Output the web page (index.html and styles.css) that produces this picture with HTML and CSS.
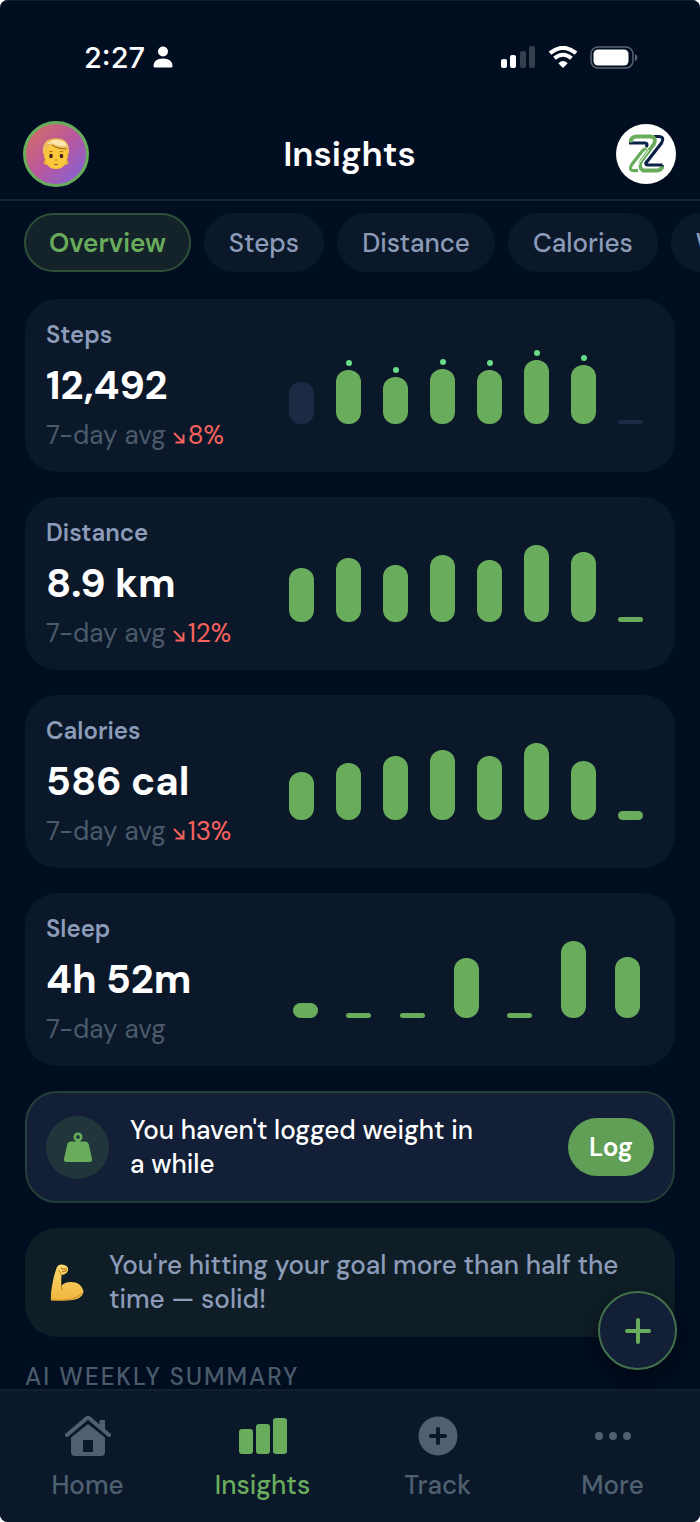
FILE: index.html
```html
<!DOCTYPE html>
<html lang="en">
<head>
    <meta charset="UTF-8">
    <meta name="viewport" content="width=device-width, initial-scale=1.0">
    <title>Insights</title>
    <link rel="stylesheet" href="styles.css">
</head>
<body>
    <div class="app">
        <!-- Status bar -->
        <div class="status-bar">
            <div class="status-left">
                <span class="time">2:27</span>
                <svg width="20" height="22" viewBox="0 0 20 22" fill="#fff">
                    <circle cx="10" cy="5.5" r="5"/>
                    <path d="M0.5 20C0.5 15.500 4 12.500 10 12.500S19.500 15.500 19.500 20Q19.500 21.500 18 21.500H2Q0.500 21.500 0.500 20Z"/>
                </svg>
            </div>
            <div class="status-right">
                <svg width="35" height="23" viewBox="0 0 35 23">
                    <rect x="0" y="13" width="6" height="9" rx="2" fill="#fff"/>
                    <rect x="9" y="9" width="6" height="13" rx="2" fill="#fff"/>
                    <rect x="19" y="5" width="6" height="17" rx="2" fill="#363f4e"/>
                    <rect x="28" y="0" width="6" height="22" rx="2" fill="#363f4e"/>
                </svg>
                <svg width="30" height="23" viewBox="0 0 30 23" fill="none" stroke="#fff">
                    <path d="M2 7.200Q15 -3.400 28 7.200" stroke-width="4.200"/>
                    <path d="M6.500 12.300Q15 5.300 23.500 12.300" stroke-width="4"/>
                    <path d="M10.300 17.200Q15 12.600 19.700 17.200L15 22Z" fill="#fff" stroke="none"/>
                </svg>
                <svg width="48" height="23" viewBox="0 0 48 23">
                    <rect x="1" y="1" width="42" height="21" rx="7" fill="none" stroke="#5b6370" stroke-width="1.500"/>
                    <rect x="3.500" y="3.500" width="35" height="16" rx="4.500" fill="#fff"/>
                    <path d="M45 8Q47.500 9 47.500 11.500T45 15Z" fill="#5b6370"/>
                </svg>
            </div>
        </div>

        <!-- Header -->
        <header class="header">
            <button class="avatar" aria-label="Profile">
                <svg width="28" height="32" viewBox="0 0 28 32">
                    <path d="M2 12Q1 0 14 0.500T26.500 12Q27 18 25 22L27 25L24 27H4L1 25L3 22Q1 18 2 12Z" fill="#e5a93d"/>
                    <path d="M9 24H19V29Q14 32 9 29Z" fill="#cf922f"/>
                    <path d="M3 13Q3 4 14 5T25 13V19Q24 31 14 31T3 19Z" fill="#fcc93e"/>
                    <path d="M1 16Q-1 1 14 0.500Q28 0 27 16Q25 15 24.500 11Q16 12 10 7Q5 9 4 15Q3 17 1 16Z" fill="#efbd59"/>
                    <path d="M5 6Q10 1 17 2T25 8Q17 9 10 5.500Z" fill="#fae6ae"/>
                    <path d="M10 7Q15 11 24.500 11" fill="none" stroke="#9c661d"/>
                    <ellipse cx="9" cy="18" rx="1.800" ry="2.200" fill="#432719"/>
                    <ellipse cx="19.500" cy="18" rx="1.800" ry="2.200" fill="#432719"/>
                    <path d="M7 14Q9 12.500 11 14M17.500 14Q19.500 12.500 21.500 14" fill="none" stroke="#a8721f"/>
                    <path d="M13 22H15.500" stroke="#dd9425" stroke-width="1.500"/>
                    <path d="M11 25.500Q14 26.500 17 25.500Q14 29 11 25.500Z" fill="#96502a"/>
                </svg>
            </button>
            <h1 class="title">Insights</h1>
            <a class="logo" href="#" aria-label="Home page">
                <svg width="60" height="60" viewBox="0 0 60 60" fill="none" stroke-width="3.200">
                    <g stroke="#0b2047">
                        <path d="M13 19H29Q32.500 19.500 30 23"/>
                        <path d="M38 12.500H43Q49 13 45.500 19L31.500 37Q27.500 41 33 41H46.500"/>
                        <path d="M46.500 41Q46 44 44 45.500"/>
                    </g>
                    <g stroke="#69ad5c">
                        <path d="M14.500 18.500Q15 12.500 21 12.500H34Q41 13 38 20L26 36Q21.500 43 27 46.500H41Q45.500 46.500 46.500 42.500" stroke-width="3.800"/>
                        <path d="M30.500 24.500Q27.500 25 25.500 28L15.500 41Q12.500 46.500 18 46.700H22"/>
                        <path d="M33 26L23.500 38.500Q20.500 43 23 46.500" stroke="#fff" stroke-width="1"/>
                    </g>
                </svg>
            </a>
        </header>

        <!-- Category tabs -->
        <div class="tabs">
            <button class="tab active">Overview</button>
            <button class="tab">Steps</button>
            <button class="tab">Distance</button>
            <button class="tab">Calories</button>
            <button class="tab">Weight</button>
        </div>

        <main class="content">
            <section class="card">
                <div class="card-info">
                    <h2 class="card-label">Steps</h2>
                    <div class="card-value">12,492</div>
                    <div class="card-sub">7-day avg
                        <span class="trend"><svg width="12" height="12" viewBox="0 0 12 12"><path d="M1 1L10.500 10.500M10.500 2.500V10.500H2.500"/></svg>8%</span>
                    </div>
                </div>
                <div class="chart">
                    <div class="col"><div class="bar muted" style="height: 42px"></div></div>
                    <div class="col"><i class="dot"></i><div class="bar" style="height: 54px"></div></div>
                    <div class="col"><i class="dot"></i><div class="bar" style="height: 47px"></div></div>
                    <div class="col"><i class="dot"></i><div class="bar" style="height: 55px"></div></div>
                    <div class="col"><i class="dot"></i><div class="bar" style="height: 54px"></div></div>
                    <div class="col"><i class="dot"></i><div class="bar" style="height: 64px"></div></div>
                    <div class="col"><i class="dot"></i><div class="bar" style="height: 59px"></div></div>
                    <div class="col"><div class="bar muted" style="height: 4px"></div></div>
                </div>
            </section>

            <section class="card">
                <div class="card-info">
                    <h2 class="card-label">Distance</h2>
                    <div class="card-value">8.9 km</div>
                    <div class="card-sub">7-day avg
                        <span class="trend"><svg width="12" height="12" viewBox="0 0 12 12"><path d="M1 1L10.500 10.500M10.500 2.500V10.500H2.500"/></svg>12%</span>
                    </div>
                </div>
                <div class="chart">
                    <div class="col"><div class="bar" style="height: 54px"></div></div>
                    <div class="col"><div class="bar" style="height: 64px"></div></div>
                    <div class="col"><div class="bar" style="height: 57px"></div></div>
                    <div class="col"><div class="bar" style="height: 67px"></div></div>
                    <div class="col"><div class="bar" style="height: 62px"></div></div>
                    <div class="col"><div class="bar" style="height: 77px"></div></div>
                    <div class="col"><div class="bar" style="height: 70px"></div></div>
                    <div class="col"><div class="bar" style="height: 5px"></div></div>
                </div>
            </section>

            <section class="card">
                <div class="card-info">
                    <h2 class="card-label">Calories</h2>
                    <div class="card-value">586 cal</div>
                    <div class="card-sub">7-day avg
                        <span class="trend"><svg width="12" height="12" viewBox="0 0 12 12"><path d="M1 1L10.500 10.500M10.500 2.500V10.500H2.500"/></svg>13%</span>
                    </div>
                </div>
                <div class="chart">
                    <div class="col"><div class="bar" style="height: 48px"></div></div>
                    <div class="col"><div class="bar" style="height: 57px"></div></div>
                    <div class="col"><div class="bar" style="height: 64px"></div></div>
                    <div class="col"><div class="bar" style="height: 70px"></div></div>
                    <div class="col"><div class="bar" style="height: 64px"></div></div>
                    <div class="col"><div class="bar" style="height: 77px"></div></div>
                    <div class="col"><div class="bar" style="height: 59px"></div></div>
                    <div class="col"><div class="bar" style="height: 9px"></div></div>
                </div>
            </section>

            <section class="card">
                <div class="card-info">
                    <h2 class="card-label">Sleep</h2>
                    <div class="card-value">4h 52m</div>
                    <div class="card-sub">7-day avg</div>
                </div>
                <div class="chart">
                    <div class="col"><div class="bar" style="height: 15px"></div></div>
                    <div class="col"><div class="bar" style="height: 5px"></div></div>
                    <div class="col"><div class="bar" style="height: 5px"></div></div>
                    <div class="col"><div class="bar" style="height: 60px"></div></div>
                    <div class="col"><div class="bar" style="height: 5px"></div></div>
                    <div class="col"><div class="bar" style="height: 77px"></div></div>
                    <div class="col"><div class="bar" style="height: 61px"></div></div>
                </div>
            </section>

            <!-- Weight reminder -->
            <div class="reminder">
                <div class="reminder-icon">
                    <svg width="30" height="32" viewBox="0 0 30 32">
                        <circle cx="15" cy="6" r="3.200" fill="none" stroke="#69ad5c" stroke-width="2.600"/>
                        <path d="M13.500 8.500H16.500V12H13.500Z" fill="#69ad5c"/>
                        <path d="M8 10.500H22Q25 10.500 25.800 13.500L29 28Q29.500 31 26.500 31H3.500Q0.500 31 1 28L4.200 13.500Q5 10.500 8 10.500Z" fill="#69ad5c"/>
                    </svg>
                </div>
                <p class="reminder-text">You haven't logged weight in<br>a while</p>
                <button class="log-btn">Log</button>
            </div>

            <div class="tip">
                <div class="tip-icon">
                    <svg width="34" height="37" viewBox="0 0 34 37">
                        <defs>
                            <linearGradient id="skin" x1="0" y1="0" x2="0" y2="1">
                                <stop offset="0" stop-color="#fbd96f"/>
                                <stop offset="1" stop-color="#f2b53d"/>
                            </linearGradient>
                        </defs>
                        <path d="M7 3Q8 0 12 0.500Q17 1 18 4Q18.500 7 16.500 9Q14 11 11.500 11Q11 16 11.500 22Q14 18 21 18Q31 18 33.500 27Q33 36 17 36.500H1Q0.500 30 2 22Q4 10 7 3Z" fill="url(#skin)"/>
                        <path d="M11.500 22Q11 25 12.500 26.500M8 6Q11 8.500 11.500 11" fill="none" stroke="#bd7c20"/>
                        <path d="M11 4Q14 6 17 4.500M12 7.500Q15 8 16.500 6" fill="none" stroke="#b87925" stroke-width="1.200"/>
                        <path d="M1 36Q24 38 32.500 29" fill="none" stroke="#c88b2b"/>
                    </svg>
                </div>
                <p class="tip-text">You're hitting your goal more than half the time — solid!</p>
            </div>

            <h2 class="section-title">AI WEEKLY SUMMARY</h2>
        </main>

        <button class="fab" aria-label="Add">
            <svg width="28" height="28" viewBox="0 0 28 28"><path d="M14 3V25M3 14H25" stroke="#69ad5c" stroke-width="4" stroke-linecap="round"/></svg>
        </button>

        <!-- Bottom navigation -->
        <nav class="bottom-nav">
            <a class="nav-item" href="#">
                <svg width="46" height="44" viewBox="0 0 46 44">
                    <path d="M2 21L21.500 4.500Q23 3.300 24.500 4.500L44 21" fill="none" stroke="currentColor" stroke-width="4" stroke-linecap="round"/>
                    <path d="M34.500 7Q34.500 6 35.500 6H39Q40 6 40 7V17L34.500 12.500Z" fill="currentColor"/>
                    <path d="M6 23.500L23 10L40 23.500V38Q40 42 36 42H10Q6 42 6 38Z" fill="currentColor"/>
                    <rect x="18" y="26" width="10" height="12" fill="#0a182a"/>
                </svg>
                <span>Home</span>
            </a>
            <a class="nav-item active" href="#">
                <svg width="50" height="44" viewBox="0 0 50 44" fill="currentColor">
                    <rect x="1" y="15" width="14" height="25" rx="3"/>
                    <rect x="18" y="10" width="14" height="30" rx="3"/>
                    <rect x="35" y="4" width="14" height="36" rx="3"/>
                </svg>
                <span>Insights</span>
            </a>
            <a class="nav-item" href="#">
                <svg width="44" height="44" viewBox="0 0 44 44">
                    <circle cx="22" cy="22" r="19.500" fill="currentColor"/>
                    <path d="M22 15V29M15 22H29" stroke="#0a182a" stroke-width="4" stroke-linecap="round"/>
                </svg>
                <span>Track</span>
            </a>
            <a class="nav-item" href="#">
                <svg width="44" height="44" viewBox="0 0 44 44" fill="currentColor">
                    <circle cx="8" cy="22" r="4"/>
                    <circle cx="22" cy="22" r="4"/>
                    <circle cx="36" cy="22" r="4"/>
                </svg>
                <span>More</span>
            </a>
        </nav>
    </div>
</body>
</html>
```

FILE: styles.css
```css
* {
    box-sizing: border-box;
}
body {
    margin: 0;
    background-color: #fff;
    color: #fff;
    font-family: "DM Sans", Inter, "Liberation Sans", sans-serif;
    font-size: 26px;
}
h1, h2, p {
    margin: 0;
}
button {
    font-family: inherit;
    font-size: inherit;
    cursor: pointer;
}
a {
    text-decoration: none;
}
svg {
    display: block;
}
.app {
    position: relative;
    display: flex;
    flex-direction: column;
    min-height: 100vh;
    overflow: hidden;
    background-color: #010e21;
    border-radius: 8px;
    box-shadow: inset 0 1px 0 #101e2e;
}

/* status bar */
.status-bar {
    display: flex;
    justify-content: space-between;
    align-items: center;
    height: 114px;
    padding: 0 62px 0 84px;
}
.status-left {
    display: flex;
    align-items: center;
    gap: 8px;
}
.time {
    font-family: Inter, "Liberation Sans", sans-serif;
    font-size: 29px;
    font-weight: 500;
}
.status-right {
    display: flex;
    align-items: center;
    gap: 12px;
}

/* header */
.header {
    display: grid;
    grid-template-columns: 1fr auto 1fr;
    align-items: center;
    height: 87px;
    padding: 0 24px 6px 23px;
    border-bottom: 2px solid #14253a;
}
.avatar {
    display: flex;
    align-items: center;
    justify-content: center;
    width: 66px;
    height: 66px;
    padding: 0;
    border: 3px solid #69ad5c;
    border-radius: 50%;
    background: linear-gradient(135deg, #d6705c, #b9579f 50%, #7b64dc);
}
.title {
    font-size: 35px;
    font-weight: 600;
    line-height: 44px;
}
.logo {
    justify-self: end;
    width: 60px;
    height: 60px;
    border-radius: 50%;
    background-color: #fff;
}

/* tabs */
.tabs {
    display: flex;
    gap: 13px;
    padding: 12px 24px 26px;
    overflow: hidden;
}
.tab {
    flex: none;
    height: 59px;
    padding: 0 23px;
    border: 2px solid #0a182a;
    border-radius: 30px;
    background-color: #0a182a;
    color: #8c9bb8;
    font-weight: 500;
}
.tab.active {
    border-color: #2d5138;
    background-color: #132329;
    color: #69ad5c;
    font-weight: 600;
}

/* cards */
.content {
    display: flex;
    flex-direction: column;
    gap: 25px;
    padding: 1px 25px 0;
}
.card {
    display: grid;
    grid-template-columns: 13fr 21fr;
    align-items: center;
    padding: 20px 21px 21px;
    border-radius: 32px;
    background-color: #0a182a;
}
.card-info {
    display: flex;
    flex-direction: column;
    gap: 8px;
}
.card-label {
    color: #8c9bb8;
    font-size: 24px;
    font-weight: 600;
    line-height: 32px;
}
.card-value {
    font-size: 40px;
    font-weight: 700;
    line-height: 52px;
}
.card-sub {
    color: #4b5b6b;
    line-height: 32px;
    white-space: nowrap;
}
.trend {
    color: #f9625d;
}
.trend svg {
    display: inline-block;
    margin-right: 3px;
    fill: none;
    stroke: #f9625d;
    stroke-width: 2;
}
.chart {
    display: flex;
    height: 77px;
}
.col {
    flex: 1;
    display: flex;
    flex-direction: column;
    align-items: center;
    justify-content: flex-end;
}
.bar {
    width: 25px;
    border-radius: 12px;
    background-color: #69ad5c;
}
.bar.muted {
    background-color: #1b2b44;
}
.dot {
    width: 6px;
    height: 6px;
    margin-bottom: 4px;
    border-radius: 50%;
    background-color: #66dc85;
}

/* messages */
.reminder {
    display: flex;
    align-items: center;
    gap: 21px;
    padding: 20px 19px;
    border: 2px solid #233f38;
    border-radius: 32px;
    background-color: #121f36;
}
.reminder-icon {
    display: flex;
    flex: none;
    align-items: center;
    justify-content: center;
    width: 63px;
    height: 63px;
    border-radius: 50%;
    background-color: #20363b;
}
.reminder-text {
    flex: 1;
    font-weight: 500;
    line-height: 34px;
}
.log-btn {
    height: 58px;
    padding: 0 21px;
    border: none;
    border-radius: 29px;
    background-color: #619f57;
    color: #fff;
    font-weight: 600;
}
.tip {
    display: flex;
    align-items: center;
    gap: 21px;
    padding: 20px 21px 21px;
    border-radius: 32px;
    background-color: #0f1e26;
}
.tip-icon {
    display: flex;
    flex: none;
    justify-content: center;
    width: 42px;
}
.tip-text {
    color: #8c9bb8;
    font-weight: 500;
    line-height: 34px;
}
.section-title {
    padding-top: 3px;
    color: #4b5b6b;
    font-size: 24px;
    font-weight: 500;
    letter-spacing: 2px;
    line-height: 24px;
}

/* floating button */
.fab {
    position: absolute;
    right: 23px;
    bottom: 152px;
    display: flex;
    align-items: center;
    justify-content: center;
    width: 79px;
    height: 79px;
    padding: 0;
    border: 2px solid #42704a;
    border-radius: 50%;
    background-color: #121f36;
    box-shadow: 0 8px 24px rgba(0, 0, 10, 0.5);
}

/* bottom nav */
.bottom-nav {
    display: grid;
    grid-template-columns: repeat(4, 1fr);
    height: 133px;
    margin-top: auto;
    padding-top: 23px;
    border-top: 2px solid #121f33;
    background-color: #0a182a;
}
.nav-item {
    display: flex;
    flex-direction: column;
    align-items: center;
    gap: 11px;
    color: #4f6071;
    font-weight: 500;
    line-height: 32px;
}
.nav-item.active {
    color: #69ad5c;
}
```
